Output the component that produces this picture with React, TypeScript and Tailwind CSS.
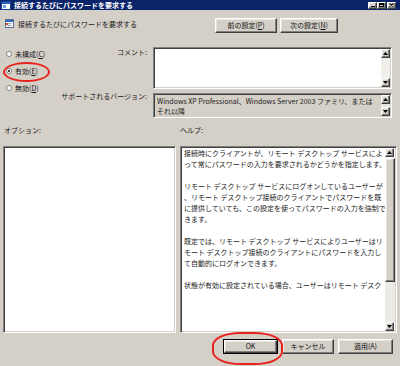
import React from 'react';

// classic 3D borders
const sunken =
    'border border-t-[#808080] border-l-[#808080] border-b-white border-r-white shadow-[inset_1px_1px_0_#404040,inset_-1px_-1px_0_#d4d0c8]';
const raised =
    'border border-t-white border-l-white border-b-[#404040] border-r-[#404040] shadow-[inset_-1px_-1px_0_#808080,inset_1px_1px_0_#e8e6e0]';

const ScrollBtn = ({ dir }: { dir: 'up' | 'down' }) => (
    <div className={`${raised} bg-[#d4d0c8] w-[9px] h-[9px] flex items-center justify-center shrink-0`}>
        <svg width="5" height="3" viewBox="0 0 5 3">
            {dir === 'up' ? <path d="M2.5 0L5 3H0Z" fill="#000" /> : <path d="M0 0H5L2.5 3Z" fill="#000" />}
        </svg>
    </div>
);

const Button = ({ children, w, isDefault }: { children: React.ReactNode; w: string; isDefault?: boolean }) => (
    <div className={`${w} h-[15px] ${isDefault ? 'border border-black' : ''} flex`}>
        <div className={`${raised} flex-1 bg-[#d4d0c8] flex items-center justify-center leading-none text-[#111]`}>
            {children}
        </div>
    </div>
);

const Radio = ({ checked, children }: { checked?: boolean; children: React.ReactNode }) => (
    <div className="flex items-center gap-[3px] h-[10px] leading-[10px]">
        <div className="w-[6px] h-[6px] rounded-full bg-white border border-[#808080] flex items-center justify-center">
            {checked && <div className="w-[2px] h-[2px] rounded-full bg-black" />}
        </div>
        <span>{children}</span>
    </div>
);

const HELP_LINES = [
    '接続時にクライアントが、リモート デスクトップ サービスによ',
    'って常にパスワードの入力を要求されるかどうかを指定します。',
    '',
    'リモート デスクトップ サービスにログオンしているユーザーが',
    '、リモート デスクトップ接続のクライアントでパスワードを既',
    'に提供していても、この設定を使ってパスワードの入力を強制で',
    'きます。',
    '',
    '既定では、リモート デスクトップ サービスによりユーザーはリ',
    'モート デスクトップ接続のクライアントにパスワードを入力し',
    'て自動的にログオンできます。',
    '',
    '状態が有効に設定されている場合、ユーザーはリモート デスク',
];

export default function App() {
    return (
        <div className="relative w-[400px] h-[366px] overflow-hidden bg-[#d4d0c8] text-[7px] text-[#1a1a1a] font-['Noto_Sans_CJK_JP','Noto_Sans',sans-serif] flex flex-col">
            {/* Title bar */}
            <div className="h-[10px] bg-[#0a246a] flex items-center pl-[1px] pr-[4px] shrink-0">
                <svg width="10" height="9" viewBox="0 0 10 9">
                    <rect x="0.5" y="0.5" width="9" height="8" fill="#fff" stroke="#1c3f94" />
                    <rect x="1" y="1" width="8" height="2" fill="#2a62c9" />
                    <rect x="2" y="4" width="3" height="3" fill="#6fa0e0" />
                </svg>
                <span className="ml-[3px] text-white font-bold leading-[10px]">接続するたびにパスワードを要求する</span>
                <div className="ml-auto flex">
                    <div className={`${raised} bg-[#d4d0c8] w-[9px] h-[7px] flex items-end justify-center pb-[1px]`}>
                        <div className="w-[4px] h-[1px] bg-black" />
                    </div>
                    <div className={`${raised} bg-[#d4d0c8] w-[9px] h-[7px] flex items-center justify-center`}>
                        <div className="w-[5px] h-[4px] border border-black border-t-2" />
                    </div>
                    <div className={`${raised} bg-[#d4d0c8] w-[9px] h-[7px] ml-[1px] flex items-center justify-center`}>
                        <svg width="5" height="4" viewBox="0 0 5 4">
                            <path d="M0.5 0.5L4.5 3.5M4.5 0.5L0.5 3.5" stroke="#000" strokeWidth="1.2" />
                        </svg>
                    </div>
                </div>
            </div>

            {/* Header row */}
            <div className="mt-[8px] h-[15px] flex shrink-0">
                <div className="pl-[5px] flex items-start gap-[4px]">
                    <svg width="9" height="9" viewBox="0 0 9 9" className="mt-[1px]">
                        <rect x="0.5" y="0.5" width="8" height="8" fill="#fff" stroke="#5a6f8f" />
                        <rect x="1" y="1" width="7" height="2" fill="#2f67c8" />
                        <path d="M2 4.5H7M2 6.5H7M4 3.5V8" stroke="#9aa8bd" strokeWidth="0.8" />
                        <rect x="1" y="4" width="2" height="2" fill="#d24a3a" />
                    </svg>
                    <span className="mt-[1px] leading-[10px]">接続するたびにパスワードを要求する</span>
                </div>
                <div className="ml-auto mr-[62px] flex gap-[3px]">
                    <Button w="w-[62px]">
                        前の設定(<span className="underline">P</span>)
                    </Button>
                    <Button w="w-[58px]">
                        次の設定(<span className="underline">N</span>)
                    </Button>
                </div>
            </div>

            {/* Settings area */}
            <div className="mt-[14px] flex shrink-0">
                <div className="w-[58px] pl-[6px] pt-[2px] flex flex-col gap-[7px]">
                    <Radio>
                        未構成(<span className="underline">C</span>)
                    </Radio>
                    <Radio checked>
                        有効(<span className="underline">E</span>)
                    </Radio>
                    <Radio>
                        無効(<span className="underline">D</span>)
                    </Radio>
                </div>
                <div className="grid grid-cols-[89px_239px] gap-x-[6px] gap-y-[4px]">
                    <div className="text-right leading-[10px]">コメント:</div>
                    <div className={`${sunken} h-[42px] bg-white flex p-[1px]`}>
                        <div className="flex-1" />
                        <div className="w-[9px] flex flex-col">
                            <ScrollBtn dir="up" />
                            <div className="flex-1 bg-[#f1efea]" />
                            <ScrollBtn dir="down" />
                        </div>
                    </div>
                    <div className="text-right leading-[10px] -mt-[2px]">サポートされるバージョン:</div>
                    <div className={`${sunken} h-[25px] bg-[#d4d0c8] flex p-[1px]`}>
                        <div className="flex-1 pl-[2px] pt-[1px] leading-[10px]">
                            <div className="whitespace-nowrap">Windows XP Professional、Windows Server 2003 ファミリ、または</div>
                            <div>それ以降</div>
                        </div>
                        <div className="w-[9px] flex flex-col">
                            <ScrollBtn dir="up" />
                            <div className="flex-1 bg-[#e8e6e1]" />
                            <ScrollBtn dir="down" />
                        </div>
                    </div>
                </div>
            </div>

            {/* Panel labels */}
            <div className="mt-[7px] h-[10px] leading-[10px] flex shrink-0">
                <div className="w-[180px] pl-[4px]">オプション:</div>
                <div>ヘルプ:</div>
            </div>

            {/* Panels */}
            <div className="mt-[11px] h-[187px] flex pl-[3px] gap-[4px] shrink-0">
                <div className={`${sunken} w-[173px] bg-white`} />
                <div className={`${sunken} w-[217px] bg-white flex p-[1px]`}>
                    <div className="flex-1 pl-[2px] leading-[11px] overflow-hidden">
                        {HELP_LINES.map((line, i) => (
                            <div key={i} className="h-[11px] whitespace-nowrap">
                                {line}
                            </div>
                        ))}
                    </div>
                    <div className="w-[10px] flex flex-col">
                        <ScrollBtn dir="up" />
                        <div className={`${raised} h-[124px] bg-[#d4d0c8] mt-[1px]`} />
                        <div className="flex-1 bg-[#eceae5]" />
                        <ScrollBtn dir="down" />
                    </div>
                </div>
            </div>

            {/* Bottom buttons */}
            <div className="mt-[6px] flex justify-end pr-[7px] gap-[4px] shrink-0">
                <Button w="w-[55px]" isDefault>
                    OK
                </Button>
                <Button w="w-[52px]">キャンセル</Button>
                <Button w="w-[55px]">適用(A)</Button>
            </div>

            {/* Red highlight marks */}
            <div className="absolute left-[3px] top-[62px] w-[47px] h-[20px] rounded-[50%] border-2 border-[#e8231d]" />
            <div className="absolute left-[212px] top-[332px] w-[71px] h-[33px] rounded-[40%] border-2 border-[#e8231d]" />
        </div>
    );
}
